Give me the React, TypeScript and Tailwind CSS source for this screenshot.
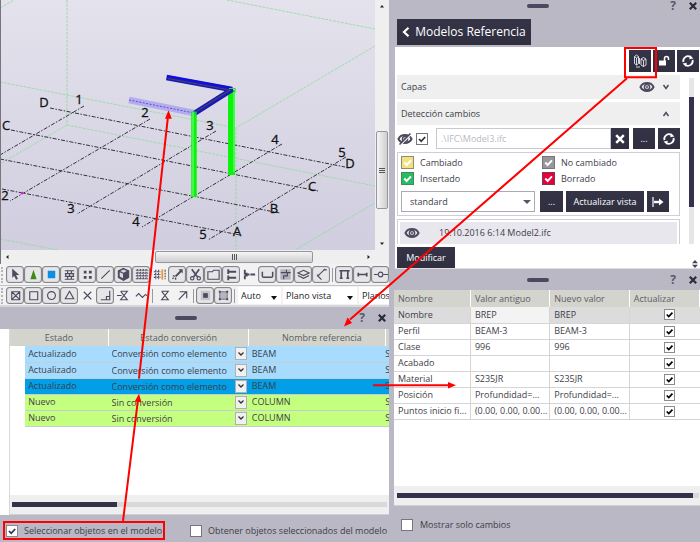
import React, { useState } from 'react';

const INK = '#4c4b5e';

/* ---------- shared bits ---------- */

interface CheckProps {
  id?: string;
  label: string;
  checked?: boolean;
  box: string;
  tick?: string;
}

const Check: React.FC<CheckProps> = ({ id, label, checked = false, box, tick = 'text-[#33323f]' }) => {
  const [on, setOn] = useState(checked);
  return (
    <span className={`relative inline-flex shrink-0 ${tick}`}>
      <input
        id={id}
        type="checkbox"
        aria-label={id ? undefined : label}
        checked={on}
        onChange={() => setOn(!on)}
        className={`appearance-none block ${box}`}
      />
      {on && (
        <svg className="absolute inset-0 w-full h-full pointer-events-none" viewBox="0 0 12 12" fill="none" stroke="currentColor" strokeWidth={1.8}>
          <path d="M3 6l2.2 2.3L9.2 4" />
        </svg>
      )}
    </span>
  );
};

const PanelHandle: React.FC<{ className?: string }> = ({ className = '' }) => (
  <div className={`flex items-center bg-[#b9b8c4] pr-[3px] ${className}`}>
    <div className="flex-1 flex justify-center pl-[14px]">
      <span className="w-[22px] h-1 rounded-full bg-[#4a4960]" />
    </div>
    <div className="flex items-center gap-3">
      <button aria-label="Ayuda" className="w-2 text-[12px] leading-4 font-bold text-[#5a596a]">?</button>
      <button aria-label="Cerrar" className="w-2">
        <svg viewBox="0 0 8 8" className="w-2 h-2 block" stroke="#2b2a3a" strokeWidth={2.2}>
          <path d="M.8 .8l6.4 6.4M7.2 .8L.8 7.2" />
        </svg>
      </button>
    </div>
  </div>
);

const EyeIcon: React.FC<{ off?: boolean }> = ({ off }) => (
  <svg viewBox="0 0 16 12" className="w-4 h-3 shrink-0" fill="none" stroke={INK}>
    <path d="M1.5 6C4 .8 12 .8 14.5 6C12 11.2 4 11.2 1.5 6z" strokeWidth={2} />
    <circle cx="8" cy="6" r="2.600" strokeWidth={1.500} />
    <circle cx="8" cy="6" r="1" fill={INK} stroke="none" />
    {off && (
      <>
        <path d="M3.500 12L14.500 1" stroke="#fff" strokeWidth={1.2} />
        <path d="M2.500 11.500L13.500 .5" strokeWidth={1.500} />
      </>
    )}
  </svg>
);

const RefreshIcon = () => (
  <svg viewBox="0 0 14 14" className="w-[14px] h-[14px]" fill="none" stroke="#fff" strokeWidth={1.800}>
    <path d="M2.400 8A4.700 4.700 0 0 1 9.500 3M11.600 6A4.700 4.700 0 0 1 4.500 11" />
    <path d="M9.200 1.200l3.200 3.400-4.200.600zM4.800 12.800L1.600 9.400l4.200-.600z" fill="#fff" stroke="none" />
  </svg>
);

/* ---------- 3D view ---------- */

const guides = [
  'M67 0V125', 'M227 0L375 29', 'M375 46L236 128', 'M0 82L236 128', 'M67 125L375 186', 'M67 125L0 164',
  'M236 128V250', 'M375 203L295 250', 'M0 239L58 250', 'M0 8L14 0',
];

const gridLines = [
  'M50 108L345 167', 'M11 130L318 191', 'M0 159L280 213', 'M2 189L240 235',
  'M84 106L0 155', 'M150 119L10 201', 'M216 131L77 214', 'M282 144L142 227', 'M346 157L208 240',
];

const gridLabels: [string, number, number][] = [
  ['D', 44, 107], ['1', 79, 104], ['C', 6, 130], ['2', 145, 117], ['3', 210, 130], ['4', 275, 144],
  ['5', 342, 157], ['D', 350, 168], ['C', 312, 191], ['B', 274, 213], ['A', 237, 236], ['5', 203, 239],
  ['4', 136, 226], ['3', 71, 213], ['2', 5, 200],
];

const ModelView = () => (
  <svg viewBox="1 0 374 250" className="block flex-1 min-w-0 h-auto bg-linear-to-b from-[#e4e2ec] to-[#d0cedf]">
    <g stroke="#8fdc98" strokeWidth={0.8} strokeDasharray="3 1" fill="none">
      {guides.map(d => <path key={d} d={d} />)}
    </g>
    <g stroke="#33323a" strokeWidth={1} strokeDasharray="4 1.500 1.500 1.500" fill="none">
      {gridLines.map(d => <path key={d} d={d} />)}
    </g>
    <circle cx="22" cy="193" r="1.300" fill="#e815e8" />
    <path d="M129 100L194 113" stroke="#b3acf2" strokeWidth={6.500} />
    <path d="M129 100L194 113" stroke="#5c55b8" strokeWidth={1} strokeDasharray="2 1.500" />
    <path d="M194 111V197" stroke="#0bf30b" strokeWidth={5.500} />
    <path d="M231.500 90V175" stroke="#0bf30b" strokeWidth={7} />
    <path d="M193 112V196M234 92V172" stroke="#7dff8a" strokeWidth={1} />
    <path d="M166.500 77.500L232 89.500L195 113" stroke="#1a18b8" strokeWidth={5.500} strokeLinejoin="bevel" fill="none" />
    <path d="M168 78.500L230 90L195 112.500" stroke="#45446a" strokeWidth={1.200} fill="none" />
    <path d="M167 76L230 87.500" stroke="#0d0df0" strokeWidth={1.500} />
    <path d="M229 88.500h6v4M192 111.500l4 1v4" stroke="#2fd468" strokeWidth={1.200} fill="none" />
    <g fontSize="13" fill="#111" textAnchor="middle" stroke="#111" strokeWidth={0.3}>
      {gridLabels.map(([t, x, y]) => <text key={`${t}${x}`} x={x} y={y}>{t}</text>)}
    </g>
  </svg>
);

/* ---------- toolbars ---------- */

interface Tool {
  name: string;
  boxed?: boolean;
  art: React.ReactNode;
}

const firstTools: Tool[] = [
  { name: 'Seleccionar', boxed: true, art: <path d="M4.500 1.500L12 8.500H8.600l2 4-2 1-1.900-4L4.500 11.500z" fill={INK} stroke="none" /> },
  { name: 'Conexiones', boxed: true, art: <path d="M8 3l3.300 10H4.700z" fill="#3f8a10" stroke="none" /> },
  { name: 'Partes', boxed: true, art: <path d="M4 4h8v8H4z" fill="#0c8fe0" stroke="none" /> },
  { name: 'Superficies', boxed: true, art: <path d="M3 4h10M3 7h10M3 10h10M3 13h10M6 4v3M10 4v3M4 7v3M8 7v3M12 7v3M6 10v3M10 10v3" /> },
  { name: 'Puntos', boxed: true, art: <path d="M4 4h3v3H4zM9.500 4h3v3h-3zM4 9.500h3v3H4zM9.500 9.500h3v3h-3z" fill={INK} stroke="none" /> },
  { name: 'Líneas', boxed: true, art: <path d="M3.500 12.500l9-9" /> },
  { name: 'Modelos', boxed: true, art: <g><path d="M8 1.500l5.500 2.700v7L8 14.200l-5.500-3v-7z" fill={INK} /><path d="M4 5.500l3.500 1.800v4.700L4 10zM4.500 4.200L8 2.700l3.500 1.500L8 6z" fill="#d8d8df" stroke="none" /></g> },
  { name: 'Malla', boxed: true, art: <path d="M2 3.500h13M2 6.500h13M2 9.500h13M2 12.500h13M4 2v12M7 2v12M10 2v12M13 2v12" strokeDasharray="2 1" /> },
  { name: 'Línea de malla', art: <g><path d="M2 5h7M2 8h7M2 11h7M4 3v10M7 3v10M14 3v10" strokeDasharray="2 1" /><path d="M11 2.500v11" stroke="#f09030" strokeWidth={1.800} /></g> },
  { name: 'Soldaduras', boxed: true, art: <g><path d="M6 10l6.500-6.500" strokeWidth={2.200} /><path d="M13.500 2.500v4.500L9 2.500z" fill={INK} stroke="none" /><path d="M2.500 12.500l3-2M3 9.500h2M6 13.500v-2" strokeWidth={1.400} strokeDasharray="2 1" /></g> },
  { name: 'Cortes', boxed: true, art: <g><path d="M4 2.500l6 8M12 2.500l-6 8" strokeWidth={1.800} /><circle cx="4.500" cy="12" r="1.800" /><circle cx="11.500" cy="12" r="1.800" /></g> },
  { name: 'Vistas', boxed: true, art: <path d="M2 13V5h5l1-1.500h6V13z" /> },
  { name: 'Tornillos', boxed: true, art: <path d="M4.500 2.500v5M4.500 9v5M4.500 5h8M4.500 11.500h8M12 4v2M12 10.500v2" strokeWidth={2} /> },
  { name: 'Tornillo simple', art: <path d="M3 3v10M3 8h12M5 6v4" strokeWidth={2} strokeDasharray="5 1" /> },
  { name: 'Armaduras', boxed: true, art: <path d="M2.500 5v4.500q0 1.500 1.500 1.500h8q1.500 0 1.500-1.500V5" strokeWidth={1.600} /> },
  { name: 'Mallas de armadura', boxed: true, art: <g><path d="M2.500 2.500h11v11h-11z" fill="#b2b1bd" stroke="none" /><path d="M3 6h6V3M6 13v-3.500h4V6h3.500" /></g> },
  { name: 'Capas', boxed: true, art: <path d="M8 3.500l6 2.800-6 2.800-6-2.800zM2 9l6 3 6-3" /> },
  { name: 'Distancias', boxed: true, art: <path d="M12 2L4 9.500l4 4M3 8.500h3M10 3h3.500" /> },
];

const lastTools: Tool[] = [
  { name: 'Ensamblajes', boxed: true, art: <path d="M2.500 4h11M4.500 4v8M11.500 4v8M3 12h3M10 12h3" strokeWidth={1.800} /> },
  { name: 'Extremos', boxed: true, art: <path d="M3 8h10M3.500 6v4M12.500 6v4" strokeWidth={1.800} /> },
  { name: 'Nodos', boxed: true, art: <g><path d="M1 8h4M11 8h5" /><circle cx="8" cy="8" r="2.500" /></g> },
];

const snapTools: Tool[] = [
  { name: 'Puntos de referencia', boxed: true, art: <path d="M4 4h8.500v8.500H4zM4 4l8.500 8.500M12.500 4L4 12.500" /> },
  { name: 'Puntos finales', boxed: true, art: <path d="M4 4h8.500v8.500H4z" /> },
  { name: 'Centros', boxed: true, art: <circle cx="8" cy="8" r="4.200" /> },
  { name: 'Puntos medios', boxed: true, art: <path d="M8 3.500l4.500 8h-9z" /> },
  { name: 'Intersecciones', art: <path d="M4 4l8 8M12 4l-8 8" /> },
  { name: 'Perpendicular', boxed: true, art: <path d="M12.500 3v9.500H3M9 12.500V9h3.500" /> },
  { name: 'Extensiones', art: <path d="M5 3.500h7l-7 9h7l-7-9M1 8h5" /> },
  { name: 'Libre', art: <path d="M2 9l3-3 4 4 3-3 2 1" /> },
];

const moreSnapTools: Tool[] = [
  { name: 'Cercano', art: <path d="M5 3.500h7l-7 9h7l-7-9" /> },
  { name: 'Dirección', art: <path d="M4 12.500l8-8.500M5 4h7.500v7" /> },
];

const planeTools: Tool[] = [
  { name: 'Plano', boxed: true, art: <g><path d="M3 3h10v10H3z" fill="#c4c4cd" stroke="none" /><path d="M5.500 5.500h5v5h-5z" fill={INK} stroke="none" /></g> },
  { name: 'Contorno', boxed: true, art: <g><path d="M4 4h8v8H4z" fill="#b5b4c0" strokeWidth={0.7} /><path d="M3 3h2v2H3zM11 3h2v2h-2zM3 11h2v2H3zM11 11h2v2h-2z" fill={INK} stroke="none" /></g> },
];

const Tools: React.FC<{ items: Tool[] }> = ({ items }) => (
  <>
    {items.map(t => (
      <button
        key={t.name}
        aria-label={t.name}
        className={`w-[18px] h-[17px] shrink-0 flex items-center justify-center rounded-[3px] ${
          t.boxed ? 'border border-[#85858a] bg-[#e6e6e8] shadow-[inset_0_0_1px_#777]' : ''
        }`}
      >
        <svg viewBox="0 0 16 16" className="w-[15px] h-[15px] shrink-0" fill="none" stroke={INK} strokeWidth={1.200}>{t.art}</svg>
      </button>
    ))}
  </>
);

const Grip = () => <span className="w-[5px] h-4 shrink-0 border-l-2 border-dotted border-[#b5b5b8] ml-px" />;
const Divider = () => <span className="w-px h-[14px] shrink-0 bg-[#9a9aa0] mx-[2px]" />;

const ToolbarSelect: React.FC<{ label: string; value: string; width: string }> = ({ label, value, width }) => (
  <span className={`relative shrink-0 bg-white ${width}`}>
    <select aria-label={label} className="appearance-none w-full h-[17px] pl-[3px] text-[9px] leading-4 text-[#222]">
      <option>{value}</option>
    </select>
    <svg viewBox="0 0 6 4" className="absolute right-1 bottom-1 w-[6px] h-1 pointer-events-none"><path d="M0 0h6L3 4z" fill="#111" /></svg>
  </span>
);

/* ---------- change list ---------- */

const changes = [
  { state: 'Actualizado', conversion: 'Conversión como elemento', name: 'BEAM', tone: 'bg-[#a8dcff]' },
  { state: 'Actualizado', conversion: 'Conversión como elemento', name: 'BEAM', tone: 'bg-[#a8dcff]' },
  { state: 'Actualizado', conversion: 'Conversión como elemento', name: 'BEAM', tone: 'bg-[#009fe8]' },
  { state: 'Nuevo', conversion: 'Sin conversión', name: 'COLUMN', tone: 'bg-[#c5ff80]' },
  { state: 'Nuevo', conversion: 'Sin conversión', name: 'COLUMN', tone: 'bg-[#c5ff80]' },
];

const ChangeTable = () => (
  <table className="w-full table-fixed border-collapse text-left">
    <colgroup>
      <col className="w-[4%]" />
      <col className="w-[22%]" />
      <col className="w-[37%]" />
      <col className="w-[36%]" />
      <col className="w-[1%]" />
    </colgroup>
    <thead>
      <tr className="h-[17px] bg-[#d3d4cd] text-center text-[#5c5c62]">
        <th colSpan={2} className="font-normal border-r border-white">Estado</th>
        <th className="font-normal border-r border-white">Estado conversión</th>
        <th className="font-normal border-r border-white pl-[10px]">Nombre referencia</th>
        <th />
      </tr>
    </thead>
    <tbody>
      {changes.map((c, i) => (
        <tr key={i} className="h-4">
          <td />
          <td className={`p-0 pl-[3px] border-b border-[#c3cdd2] ${c.tone}`}>{c.state}</td>
          <td className={`p-0 border-b border-[#c3cdd2] ${c.tone}`}>
            <span className="relative block">
              <select aria-label="Estado conversión" className="appearance-none block w-full h-[13px] pl-[3px] leading-[13px]">
                <option>{c.conversion}</option>
              </select>
              <span className="absolute right-[2px] top-0 w-3 h-[13px] bg-[#f1f1f1] border border-[#b0b0b4] flex items-center justify-center pointer-events-none">
                <svg viewBox="0 0 6 4" className="w-[6px] h-1" fill="none" stroke="#333" strokeWidth={1.300}><path d="M.5 .5L3 3 5.500 .5" /></svg>
              </span>
            </span>
          </td>
          <td className={`p-0 pl-[3px] border-b border-[#c3cdd2] ${c.tone}`}>{c.name}</td>
          <td className={`p-0 border-b border-[#c3cdd2] overflow-hidden ${c.tone}`}>S</td>
        </tr>
      ))}
    </tbody>
  </table>
);

/* ---------- property comparison ---------- */

const properties = [
  ['Nombre', 'BREP', 'BREP'],
  ['Perfil', 'BEAM-3', 'BEAM-3'],
  ['Clase', '996', '996'],
  ['Acabado', '', ''],
  ['Material', 'S235JR', 'S235JR'],
  ['Posición', 'Profundidad=...', 'Profundidad=...'],
  ['Puntos inicio fi...', '(0.00, 0.00, 0.00...', '(0.00, 0.00, 0.00...'],
];

const PropertyTable = () => (
  <table className="w-full table-fixed border-collapse text-left whitespace-nowrap">
    <colgroup>
      <col className="w-[25%]" />
      <col className="w-[26%]" />
      <col className="w-[26%]" />
      <col className="w-[23%]" />
    </colgroup>
    <thead>
      <tr className="h-[17px] bg-[#d3d4cd] text-[#5c5c62]">
        {['Nombre', 'Valor antiguo', 'Nuevo valor', 'Actualizar'].map(h => (
          <th key={h} className="p-0 pl-1 font-normal border-r border-white">{h}</th>
        ))}
      </tr>
    </thead>
    <tbody>
      {properties.map(([name, before, after], i) => (
        <tr key={name} className={`h-4 ${i === 0 ? 'bg-[#dcdcdc]' : 'bg-white'}`}>
          <td className="p-0 pl-1 border-r border-b border-[#d5d5d8]">{name}</td>
          <td className={`p-0 pl-1 border-r border-b border-[#d5d5d8] ${i === 0 ? 'bg-[#f3f3f3]' : ''}`}>{before}</td>
          <td className="p-0 pl-1 border-r border-b border-[#d5d5d8]">{after}</td>
          <td className="p-0 pl-[10px] border-b border-[#d5d5d8]">
            <span className="flex justify-center">
              <Check label={`Actualizar ${name}`} checked box="w-[11px] h-[11px] bg-white border border-[#8c8c90]" tick="text-black" />
            </span>
          </td>
        </tr>
      ))}
    </tbody>
  </table>
);

/* ---------- reference models ---------- */

const legend = [
  { id: 'changed', label: 'Cambiado', box: 'w-[13px] h-[13px] bg-[#f3e27c] border border-[#8d8a80]' },
  { id: 'same', label: 'No cambiado', box: 'w-[13px] h-[13px] bg-[#97979b] border border-[#75757a]' },
  { id: 'added', label: 'Insertado', box: 'w-[13px] h-[13px] bg-[#1fbf62] border border-[#55805f]' },
  { id: 'removed', label: 'Borrado', box: 'w-[13px] h-[13px] bg-[#e6003c] border border-[#7d3a4a]' },
];

const DARK = 'bg-[#33324a] bg-linear-to-b from-[#353447] to-[#302f40] text-white flex items-center justify-center shrink-0';

const ReferenceModels = () => (
  <section className="bg-[#b9b8c4]">
    <PanelHandle className="h-[12px]" />
    <div className="pl-[5px] pt-[7px]">
      <button className={`${DARK} h-[26px] w-[134px] gap-[5px] text-[12px]`}>
        <svg viewBox="0 0 8 10" className="w-2 h-[10px]" fill="none" stroke="#fff" strokeWidth={2.200}><path d="M6.500 .8L2 5l4.500 4.200" /></svg>
        Modelos Referencia
      </button>
    </div>
    <div className="mt-[2px] ml-[3px] bg-white pt-[3px] pl-[2px] border-b border-[#dddde2]">
      <div className="flex justify-end gap-[2px] pr-px">
        <button aria-label="Comparar modelos" className={`${DARK} w-[22px] h-[22px]`}>
          <svg viewBox="0 0 14 14" className="w-[14px] h-[14px]" fill="none" stroke="#e8e8ee" strokeWidth={0.9}>
            <path d="M1.500 2.500L3.500 1l2 1.500v7l-2 1.500-2-1.500zM1.500 2.500l2 1.500 2-1.500M3.500 4v7M8 5l2.500-1.500L13 5v6l-2.500 1.500L8 11zM8 5l2.500 1.500L13 5M10.500 6.500v6M3 13h4M6.500 4v6" />
          </svg>
        </button>
        <button aria-label="Desbloquear" className={`${DARK} w-[22px] h-[22px]`}>
          <svg viewBox="0 0 14 14" className="w-[14px] h-[14px]" fill="none" stroke="#fff">
            <path d="M2 6.500h7v5H2z" fill="#fff" stroke="none" />
            <path d="M7.500 7V4.500a2 2 0 0 1 4 0V6" strokeWidth={1.500} />
          </svg>
        </button>
        <button aria-label="Actualizar" className={`${DARK} w-[22px] h-[22px]`}><RefreshIcon /></button>
      </div>

      <div className="flex mt-[3px]">
        <div className="flex-1 min-w-0 flex flex-col gap-[3px]">
          <button className="h-6 bg-[#efefef] flex items-center pl-1 pr-[10px] text-left">
            <span className="flex-1">Capas</span>
            <EyeIcon />
            <svg viewBox="0 0 8 6" className="w-2 h-[6px] ml-[7px]" fill="none" stroke={INK} strokeWidth={1.500}><path d="M1.500 1L4 4.500 6.500 1" /></svg>
          </button>
          <button className="h-[23px] bg-[#efefef] flex items-center pl-1 pr-[10px] text-left">
            <span className="flex-1">Detección cambios</span>
            <svg viewBox="0 0 8 6" className="w-2 h-[6px]" fill="none" stroke={INK} strokeWidth={1.500}><path d="M1.500 5L4 1.500 6.500 5" /></svg>
          </button>

          <div className="flex items-center">
            <EyeIcon off />
            <span className="ml-[3px] mr-2 flex"><Check label="Usar modelo" checked box="w-3 h-3 bg-white border border-[#77767f]" /></span>
            <input
              type="text"
              aria-label="Archivo"
              placeholder=".\IFC\Model3.ifc"
              className="flex-1 min-w-0 h-[21px] border border-[#c9c8d2] pl-1 placeholder:text-[#b9b9c0]"
            />
            <button aria-label="Quitar" className={`${DARK} w-[18px] h-[21px]`}>
              <svg viewBox="0 0 10 10" className="w-[10px] h-[10px]" stroke="#fff" strokeWidth={2.500}><path d="M1.200 1.200l7.600 7.600M8.800 1.200L1.200 8.800" /></svg>
            </button>
            <button aria-label="Examinar" className={`${DARK} w-[22px] h-[21px] ml-1`}>...</button>
            <button aria-label="Recargar" className={`${DARK} w-[22px] h-[21px] ml-[3px]`}><RefreshIcon /></button>
          </div>

          <div className="border border-[#cfced8] p-[3px]">
            <div className="grid grid-cols-[141px_1fr] gap-y-[3px]">
              {legend.map(l => (
                <label key={l.id} htmlFor={l.id} className="flex items-center gap-[6px] h-[13px]">
                  <Check id={l.id} label={l.label} checked box={l.box} tick="text-white" />
                  {l.label}
                </label>
              ))}
            </div>
            <div className="flex gap-[3px] mt-[6px] pr-[7px]">
              <span className="relative flex-1 mr-[2px]">
                <select aria-label="Configuración" className="appearance-none w-full h-[21px] border border-[#aaa9b4] bg-white pl-2">
                  <option>standard</option>
                </select>
                <svg viewBox="0 0 8 4" className="absolute right-1 top-[9px] w-2 h-1 pointer-events-none"><path d="M0 0h8L4 4z" fill="#55546a" /></svg>
              </span>
              <button aria-label="Editar configuración" className={`${DARK} w-[23px] h-[21px]`}>...</button>
              <button className={`${DARK} w-[78px] h-[21px]`}>Actualizar vista</button>
              <button aria-label="Exportar" className={`${DARK} w-[22px] h-[21px]`}>
                <svg viewBox="0 0 12 12" className="w-3 h-3" stroke="#fff" fill="none"><path d="M1 1v10" strokeWidth={1.200} /><path d="M2 6h6" strokeWidth={2.400} /><path d="M7 2.500L11.500 6 7 9.500z" fill="#fff" stroke="none" /></svg>
              </button>
            </div>
          </div>

          <div className="border border-b-0 border-[#cfced8] px-[2px] pt-[2px]">
            <button className="w-full h-[22px] bg-[#e8e7ee] flex items-center gap-[19px] pl-1 text-left">
              <EyeIcon />
              19.10.2016 6:14 Model2.ifc
            </button>
          </div>
        </div>
        <div className="w-5 pl-[9px] pt-[3px]">
          <div className="w-[5px] h-full bg-[#e6e6e8] pt-[19px]">
            <div className="w-[5px] h-3/4 bg-[#33324a]" />
          </div>
        </div>
      </div>

      <div className="flex justify-between items-end mt-[3px]">
        <button className={`${DARK} w-[58px] h-[21px]`}>Modificar</button>
        <svg viewBox="0 0 8 8" className="w-2 h-2 mr-px"><path d="M4 0l3 3.300H1zM4 8l3-3.300H1z" fill="#45445a" /></svg>
      </div>
    </div>
  </section>
);

/* ---------- callouts drawn over the panels ---------- */

const Callouts = () => (
  <svg className="absolute inset-0 w-full h-full pointer-events-none" viewBox="0 0 700 542" preserveAspectRatio="none" fill="none" stroke="#fe0000" strokeWidth={2}>
    <path d="M625 48h31v29h-31zM4 521h160v17H4z" />
    <path d="M627 78L350 319M139 378L167.800 118M123 520L138 399M373 384.500H450" />
    <g fill="#fe0000" stroke="none">
      <path d="M344 326l3.500-9 4.500 5.500zM168.500 110l3.300 8.500h-6.800zM139 393l2.500 8.500-6.800-.800zM456 384.500l-8 3.300v-6.600z" />
    </g>
  </svg>
);

const App: React.FC = () => {
  return (
    <main className="relative flex min-h-screen bg-[#b9b8c4] font-['Open_Sans',sans-serif] text-[9px] leading-3 text-[#3e3e48]">
      {/* Left: model view, toolbars, change list */}
      <div className="w-[56%] flex flex-col pr-[3px]">
        <div className="flex border-l border-[#77767c]">
          <ModelView />
          <div className="w-[14px] shrink-0 bg-[#efeff0] flex flex-col items-center pt-1 pb-1">
            <svg viewBox="0 0 6 4" className="w-[6px] h-1 shrink-0"><path d="M1 3.500h4L3 1z" fill="#222" /></svg>
            <div className="h-[123px] shrink-0" />
            <div className="w-3 h-[78px] border border-[#97979b] rounded-[2px] bg-linear-to-r from-[#f5f5f5] to-[#cfcfd2] flex flex-col justify-center items-center gap-px">
              <span className="w-[6px] h-px bg-[#55555a]" />
              <span className="w-[6px] h-px bg-[#55555a]" />
              <span className="w-[6px] h-px bg-[#55555a]" />
            </div>
            <svg viewBox="0 0 6 4" className="w-[6px] h-1 shrink-0 mt-auto"><path d="M1 .5h4L3 3z" fill="#222" /></svg>
          </div>
        </div>

        <div className="h-[14px] bg-[#efeff0] border-l border-[#77767c] flex items-center pl-1 pr-[18px]">
          <svg viewBox="0 0 4 6" className="w-1 h-[6px] shrink-0"><path d="M3.500 1v4L1 3z" fill="#222" /></svg>
          <div className="ml-[146px] w-[158px] h-3 border border-[#97979b] rounded-[2px] bg-linear-to-b from-[#f5f5f5] to-[#cfcfd2] flex justify-center items-center gap-px">
            <span className="w-px h-[6px] bg-[#55555a]" />
            <span className="w-px h-[6px] bg-[#55555a]" />
            <span className="w-px h-[6px] bg-[#55555a]" />
          </div>
          <svg viewBox="0 0 4 6" className="w-1 h-[6px] shrink-0 ml-auto"><path d="M.5 1v4L3 3z" fill="#222" /></svg>
        </div>

        <div className="bg-[#f2f2f3]">
          <div className="h-[22px] flex items-center overflow-hidden border-b border-[#c4c4c8]">
            <Grip />
            <Tools items={firstTools} />
            <Divider />
            <Tools items={lastTools} />
          </div>
          <div className="h-[21px] flex items-center overflow-hidden border-b-2 border-[#d5d5da]">
            <Grip />
            <Tools items={snapTools} />
            <Divider />
            <Tools items={moreSnapTools} />
            <Divider />
            <Tools items={planeTools} />
            <Divider />
            <span className="flex gap-[2px] ml-px">
              <ToolbarSelect label="Modo" value="Auto" width="w-[43px]" />
              <ToolbarSelect label="Vista" value="Plano vista" width="w-[74px]" />
              <ToolbarSelect label="Planos" value="Planos vista" width="w-[74px]" />
            </span>
          </div>
        </div>

        <PanelHandle className="h-[22px]" />
        <section className="flex-1 flex flex-col bg-white pl-[9px]">
          <div className="flex-1 flex flex-col border-l border-[#d9d9dd]">
            <div className="flex-1 min-h-[165px]">
              <ChangeTable />
            </div>
            <div className="h-5 bg-[#efeff0] border-b border-[#d0d0d4] px-[2px] flex items-center">
              <div className="flex-1 h-[5px] bg-[#d9d9dc]">
                <div className="w-[28%] h-[5px] bg-[#33324a]" />
              </div>
            </div>
          </div>
        </section>
        <footer className="h-[28px] flex items-center pl-[6px] pt-1">
          <label htmlFor="pick" className="w-[184px] flex items-center gap-[6px]">
            <Check id="pick" label="" checked box="w-3 h-3 bg-white border border-[#8a8994]" />
            Seleccionar objetos en el modelo
          </label>
          <label htmlFor="fetch" className="flex items-center gap-[6px]">
            <Check id="fetch" label="" box="w-3 h-3 bg-white border border-[#77767f]" />
            Obtener objetos seleccionados del modelo
          </label>
        </footer>
      </div>

      {/* Right: reference models and property comparison */}
      <div className="flex-1 min-w-0 flex flex-col">
        <ReferenceModels />
        <PanelHandle className="h-[21px]" />
        <section className="flex-1 flex flex-col bg-white ml-[2px]">
          <div className="flex-1 min-h-[196px]">
            <PropertyTable />
          </div>
          <div className="h-5 bg-[#efeff0] border-b border-[#d0d0d4] pl-[3px] pr-px flex items-center">
            <div className="flex-1 h-[5px] bg-[#d9d9dc]">
              <div className="w-[98%] h-[5px] bg-[#33324a]" />
            </div>
          </div>
        </section>
        <footer className="h-[37px] flex items-center pl-[9px]">
          <label htmlFor="only" className="flex items-center gap-[7px]">
            <Check id="only" label="" box="w-3 h-3 bg-white border border-[#77767f]" />
            Mostrar solo cambios
          </label>
        </footer>
      </div>

      <Callouts />
    </main>
  );
};

export default App;
